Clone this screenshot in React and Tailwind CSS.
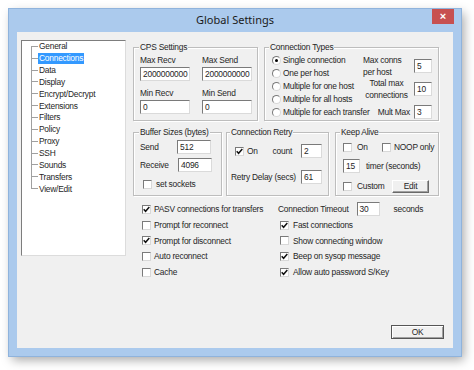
import React from "react";

function Check({ on }) {
  return (
    <span className="w-[9px] h-[9px] shrink-0 bg-white border border-t-[#7a7a7a] border-l-[#7a7a7a] border-r-[#d8d8d8] border-b-[#d8d8d8] flex items-center justify-center">
      {on && (
        <svg width="7" height="7" viewBox="0 0 7 7">
          <path d="M0.7 3.2 L2.6 5.3 L6.3 1.1" fill="none" stroke="#111" strokeWidth="1.5" />
        </svg>
      )}
    </span>
  );
}

function Radio({ on }) {
  return (
    <span className="w-[9px] h-[9px] shrink-0 rounded-full bg-white border border-t-[#7a7a7a] border-l-[#7a7a7a] border-r-[#d8d8d8] border-b-[#d8d8d8] flex items-center justify-center">
      {on && <span className="w-[3px] h-[3px] rounded-full bg-black" />}
    </span>
  );
}

function Field({ value, cls }) {
  return (
    <div
      className={
        "h-[14px] shrink-0 bg-white border border-t-[#7a7a7a] border-l-[#7a7a7a] border-r-[#dadada] border-b-[#dadada] pl-[2px] leading-[12px] overflow-hidden whitespace-nowrap " +
        cls
      }
    >
      {value}
    </div>
  );
}

function Group({ label, labelLeft, className, children }) {
  return (
    <div
      className={
        "relative shrink-0 border border-[#bdbdbd] shadow-[inset_1px_1px_0_#fff,1px_1px_0_#fff] " +
        className
      }
    >
      <span className={"absolute -top-[6px] bg-[#f0f0f0] px-[1px] leading-[10px] whitespace-nowrap " + labelLeft}>
        {label}
      </span>
      {children}
    </div>
  );
}

const treeItems = [
  "General",
  "Connections",
  "Data",
  "Display",
  "Encrypt/Decrypt",
  "Extensions",
  "Filters",
  "Policy",
  "Proxy",
  "SSH",
  "Sounds",
  "Transfers",
  "View/Edit",
];

function Tree() {
  return (
    <div className="ml-[4px] mt-[8px] w-[105px] h-[216px] shrink-0 bg-white border border-t-[#7d7d7d] border-l-[#7d7d7d] border-r-[#dcdcdc] border-b-[#dcdcdc]">
      {treeItems.map((t, i) => (
        <div key={t} className="h-[11.85px] flex items-center">
          <div className="w-[7px] ml-[9px] h-full flex flex-col shrink-0">
            <div
              className={
                "h-1/2 border-b border-b-[#a0a0a0] " + (i === 0 ? "" : "border-l border-l-[#a0a0a0]")
              }
            />
            <div className={"h-1/2 " + (i === treeItems.length - 1 ? "" : "border-l border-l-[#a0a0a0]")} />
          </div>
          <span
            className={
              "px-[1px] leading-[11px] whitespace-nowrap " + (i === 1 ? "bg-[#3399ff] text-white" : "")
            }
          >
            {t}
          </span>
        </div>
      ))}
    </div>
  );
}

const radios = [
  "Single connection",
  "One per host",
  "Multiple for one host",
  "Multiple for all hosts",
  "Multiple for each transfer",
];

const leftChecks = [
  ["PASV connections for transfers", true],
  ["Prompt for reconnect", false],
  ["Prompt for disconnect", true],
  ["Auto reconnect", false],
  ["Cache", false],
];

const rightChecks = [
  ["Fast connections", true],
  ["Show connecting window", false],
  ["Beep on sysop message", true],
  ["Allow auto password S/Key", true],
];

export default function App() {
  return (
    <div className="w-[474px] h-[370px] bg-white overflow-hidden pt-[9px] pl-[9px] font-['Liberation_Sans',Arial,sans-serif] text-[8.4px] tracking-[-0.22px] text-[#262626]">
      <div className="w-[452px] h-[347px] bg-[#abcaed] flex flex-col shadow-[0_0_0_1px_#8fb3dc,3px_4px_10px_rgba(0,0,0,0.35)]">
        {/* title bar */}
        <div className="h-[23px] flex items-start shrink-0">
          <div className="flex-1" />
          <div className="pl-[7px] h-[23px] flex items-center font-['Noto_Sans',Arial,sans-serif] text-[11px] tracking-normal text-[#1a1a1a]">
            Global Settings
          </div>
          <div className="flex-1 flex justify-end pr-[7px]">
            <div className="w-[22px] h-[15px] bg-[#c75050] flex items-center justify-center text-white text-[11px] font-bold leading-none tracking-normal">
              ×
            </div>
          </div>
        </div>

        {/* client */}
        <div className="mx-[8px] h-[316px] bg-[#f0f0f0] flex flex-col">
          <div className="flex">
            <Tree />
            <div className="ml-[7px] w-[306px] pt-[15px]">
              {/* row 1 */}
              <div className="flex gap-[6px]">
                <Group label="CPS Settings" labelLeft="left-[5px]" className="w-[125px] h-[74px] pt-[7px] pl-[6px]">
                  <div className="grid grid-cols-[50px_50px] gap-x-[12px]">
                    <div className="h-[10px] leading-[10px]">Max Recv</div>
                    <div className="h-[10px] leading-[10px]">Max Send</div>
                    <Field value="2000000000" cls="mt-[2px] w-[50px]" />
                    <Field value="2000000000" cls="mt-[2px] w-[50px]" />
                    <div className="h-[10px] leading-[10px] mt-[7px]">Min Recv</div>
                    <div className="h-[10px] leading-[10px] mt-[7px]">Min Send</div>
                    <Field value="0" cls="mt-[2px] w-[50px]" />
                    <Field value="0" cls="mt-[2px] w-[50px]" />
                  </div>
                </Group>
                <Group label="Connection Types" labelLeft="left-[4px]" className="w-[175px] h-[74px] pt-[6px] flex">
                  <div className="pl-[7px] w-[98px] shrink-0">
                    {radios.map((t, i) => (
                      <div key={t} className="h-[13px] flex items-center gap-[2px]">
                        <Radio on={i === 0} />
                        <span className="whitespace-nowrap">{t}</span>
                      </div>
                    ))}
                  </div>
                  <div className="grid grid-cols-[47px_18px] gap-x-[4px] auto-rows-[23px] items-center">
                    <span className="leading-[12px] whitespace-nowrap">
                      Max conns
                      <br />
                      per host
                    </span>
                    <Field value="5" cls="w-[18px]" />
                    <span className="leading-[12px] text-center whitespace-nowrap">
                      Total max
                      <br />
                      connections
                    </span>
                    <Field value="10" cls="w-[18px]" />
                    <span className="leading-[12px] text-right whitespace-nowrap">Mult Max</span>
                    <Field value="3" cls="w-[18px]" />
                  </div>
                </Group>
              </div>

              {/* row 2 */}
              <div className="flex mt-[11px]">
                <Group label="Buffer Sizes (bytes)" labelLeft="left-[5px]" className="w-[89px] h-[64px] pt-[7px] pl-[6px]">
                  <div className="flex items-center h-[14px]">
                    <span className="w-[37px]">Send</span>
                    <Field value="512" cls="w-[34px]" />
                  </div>
                  <div className="flex items-center h-[14px] mt-[4px]">
                    <span className="w-[38px]">Receive</span>
                    <Field value="4096" cls="w-[34px]" />
                  </div>
                  <div className="flex items-center h-[10px] mt-[7px] pl-[3px] gap-[4px]">
                    <Check />
                    <span className="whitespace-nowrap">set sockets</span>
                  </div>
                </Group>
                <Group label="Connection Retry" labelLeft="left-[3px]" className="ml-[4px] w-[103px] h-[64px] pt-[11px] pr-[6px]">
                  <div className="flex items-center h-[14px]">
                    <span className="ml-[8px]">
                      <Check on />
                    </span>
                    <span className="ml-[3px]">On</span>
                    <span className="ml-auto mr-[9px]">count</span>
                    <Field value="2" cls="w-[21px]" />
                  </div>
                  <div className="flex items-center h-[14px] mt-[12px]">
                    <span className="ml-[4px] whitespace-nowrap">Retry Delay (secs)</span>
                    <Field value="61" cls="ml-auto w-[21px]" />
                  </div>
                </Group>
                <Group label="Keep Alive" labelLeft="left-[4px]" className="ml-[6px] w-[104px] h-[64px] pt-[9px] pl-[7px]">
                  <div className="flex items-center h-[10px]">
                    <div className="w-[39px] flex items-center gap-[5px]">
                      <Check />
                      <span>On</span>
                    </div>
                    <div className="flex items-center gap-[3px]">
                      <Check />
                      <span className="whitespace-nowrap">NOOP only</span>
                    </div>
                  </div>
                  <div className="flex items-center h-[14px] mt-[7px]">
                    <Field value="15" cls="w-[17px]" />
                    <span className="ml-[6px] whitespace-nowrap">timer (seconds)</span>
                  </div>
                  <div className="flex items-center h-[13px] mt-[7px]">
                    <div className="w-[49px] flex items-center gap-[5px]">
                      <Check />
                      <span>Custom</span>
                    </div>
                    <div className="w-[37px] h-[13px] bg-[#f0f0f0] border border-t-white border-l-white border-r-[#696969] border-b-[#696969] shadow-[inset_-1px_-1px_0_#a0a0a0] flex items-center justify-center leading-none">
                      Edit
                    </div>
                  </div>
                </Group>
              </div>

              {/* bottom options */}
              <div className="flex mt-[5.5px]">
                <div className="ml-[9px] w-[136px] shrink-0">
                  {leftChecks.map(([t, on]) => (
                    <div key={t} className="h-[15.75px] flex items-center gap-[3px]">
                      <Check on={on} />
                      <span className="whitespace-nowrap">{t}</span>
                    </div>
                  ))}
                </div>
                <div>
                  <div className="h-[15.75px] flex items-center">
                    <span className="whitespace-nowrap">Connection Timeout</span>
                    <Field value="30" cls="ml-[8px] w-[23px]" />
                    <span className="ml-[14px]">seconds</span>
                  </div>
                  {rightChecks.map(([t, on]) => (
                    <div key={t} className="h-[15.75px] flex items-center gap-[4px] pl-[2px]">
                      <Check on={on} />
                      <span className="whitespace-nowrap">{t}</span>
                    </div>
                  ))}
                </div>
              </div>
            </div>
          </div>

          <div className="mt-auto flex justify-end pr-[9px] pb-[9px]">
            <div className="w-[53px] h-[14px] bg-[#f0f0f0] border border-[#555] shadow-[inset_1px_1px_0_#fff,inset_-1px_-1px_0_#a0a0a0] flex items-center justify-center leading-none">
              OK
            </div>
          </div>
        </div>
      </div>
    </div>
  );
}
